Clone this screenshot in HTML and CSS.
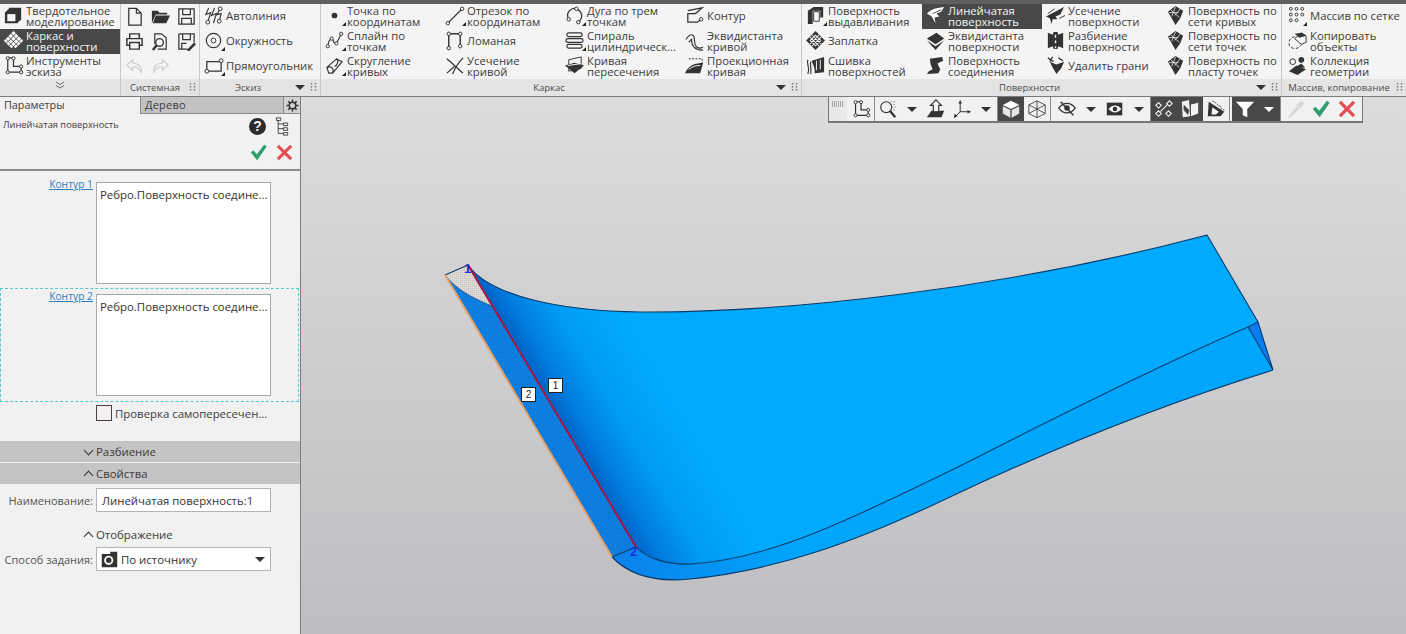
FILE: index.html
```html
<!DOCTYPE html>
<html lang="ru">
<head>
<meta charset="utf-8">
<title>Линейчатая поверхность</title>
<link rel="stylesheet" href="styles.css">
</head>
<body>
<svg class="sprite" xmlns="http://www.w3.org/2000/svg">
<defs>
<symbol id="solid" viewBox="0 0 22 22"><path d="M2 8 7 3H19V15L15 19H2Z" fill="#333"/><path d="M4.500 9.500H13V17H4.500Z" fill="#f4f4f4"/></symbol>
<symbol id="mesh" viewBox="0 0 22 22"><g fill="currentColor" transform="rotate(45 11 11)"><rect x="4" y="4" width="3.300" height="3.300"/><rect x="8" y="4" width="3.300" height="3.300"/><rect x="12" y="4" width="3.300" height="3.300"/><rect x="15.800" y="4" width="2.500" height="3.300"/><rect x="4" y="8" width="3.300" height="3.300"/><rect x="8" y="8" width="3.300" height="3.300"/><rect x="12" y="8" width="3.300" height="3.300"/><rect x="15.800" y="8" width="2.500" height="3.300"/><rect x="4" y="12" width="3.300" height="3.300"/><rect x="8" y="12" width="3.300" height="3.300"/><rect x="12" y="12" width="3.300" height="3.300"/><rect x="15.800" y="12" width="2.500" height="3.300"/><rect x="4" y="15.800" width="3.300" height="2.500"/><rect x="8" y="15.800" width="3.300" height="2.500"/><rect x="12" y="15.800" width="3.300" height="2.500"/></g></symbol>
<symbol id="sketch" viewBox="0 0 22 22"><path d="M5 3V18H19V12H11V3Z" fill="none" stroke="#333" stroke-width="1.300"/><g fill="#f4f4f4" stroke="#333"><circle cx="5" cy="3.500" r="1.700"/><circle cx="11" cy="3.500" r="1.700"/><circle cx="5" cy="18" r="1.700"/><circle cx="19" cy="18" r="1.700"/><circle cx="19" cy="12" r="1.700"/></g></symbol>
<symbol id="new" viewBox="0 0 22 22"><path d="M5 2.500H13L18 7.500V20H5ZM13 2.500V7.500H18" fill="none" stroke="#333" stroke-width="1.300"/></symbol>
<symbol id="open" viewBox="0 0 22 22"><path d="M2 5H8L10 7H18V9H6L2 18Z" fill="#333"/><path d="M6 10H21L17 18H3Z" fill="#333"/></symbol>
<symbol id="save" viewBox="0 0 22 22"><path d="M3 3H19V19H3ZM7 3V9H15V3M6 19V13H16V19" fill="none" stroke="#333" stroke-width="1.300"/></symbol>
<symbol id="print" viewBox="0 0 22 22"><path d="M6 8V3H16V8M6 15H3V8H19V15H16M6 12H16V19H6Z" fill="none" stroke="#333" stroke-width="1.500"/></symbol>
<symbol id="preview" viewBox="0 0 22 22"><path d="M5 14V3H12L17 7V19H8" fill="none" stroke="#333" stroke-width="1.200"/><circle cx="10" cy="12" r="4" fill="#f4f4f4" stroke="#333" stroke-width="1.400"/><path d="M7 15 3 20" stroke="#333" stroke-width="2.500"/></symbol>
<symbol id="saveas" viewBox="0 0 22 22"><path d="M3 3H19V12M12 19H3V3M7 3V9H15V3M6 19V13H11" fill="none" stroke="#333" stroke-width="1.300"/><path d="M12 19 19 12 21 14 14 21H12Z" fill="#333"/></symbol>
<symbol id="undo" viewBox="0 0 22 22"><path d="M9 4 3 9.500 9 15V11.500C13 11 16 13 18 17 19 11 15 7.500 9 7.500Z" fill="none" stroke="#cfcfcf" stroke-width="1.300"/></symbol>
<symbol id="redo" viewBox="0 0 22 22"><path d="M13 4 19 9.500 13 15V11.500C9 11 6 13 4 17 3 11 7 7.500 13 7.500Z" fill="none" stroke="#cfcfcf" stroke-width="1.300"/></symbol>
<symbol id="auto" viewBox="0 0 22 22"><path d="M6 3 3 10 8 8 5 18M12 3 9 11 14 9 11 19M18 3 15 10 19 9 17 17" fill="none" stroke="#333" stroke-width="1.200"/><circle cx="5" cy="18" r="2" fill="#f4f4f4" stroke="#333"/><circle cx="17" cy="17" r="2" fill="#f4f4f4" stroke="#333"/><circle cx="18" cy="4" r="2" fill="#f4f4f4" stroke="#333"/></symbol>
<symbol id="circle" viewBox="0 0 22 22"><circle cx="11" cy="11" r="7.500" fill="none" stroke="#333" stroke-width="1.200"/><circle cx="11" cy="11" r="2.500" fill="none" stroke="#333"/></symbol>
<symbol id="rect" viewBox="0 0 22 22"><path d="M4 7H19V17H4Z" fill="none" stroke="#333" stroke-width="1.300"/><circle cx="19" cy="6" r="2" fill="#f4f4f4" stroke="#333"/><circle cx="4" cy="17" r="2" fill="#f4f4f4" stroke="#333"/></symbol>
<symbol id="point" viewBox="0 0 22 22"><circle cx="11" cy="11" r="3" fill="#333"/></symbol>
<symbol id="seg" viewBox="0 0 22 22"><path d="M5 18 18 5" stroke="#333" stroke-width="1.300"/><circle cx="4" cy="19" r="1.800" fill="#f4f4f4" stroke="#333"/><circle cx="19" cy="4" r="1.800" fill="#f4f4f4" stroke="#333"/></symbol>
<symbol id="arc" viewBox="0 0 22 22"><path d="M5 15C1 8 8 2 13 4 20 7 20 14 15 18" fill="none" stroke="#333" stroke-width="1.300"/><circle cx="5" cy="15" r="1.800" fill="#f4f4f4" stroke="#333"/><circle cx="13" cy="4" r="1.800" fill="#f4f4f4" stroke="#333"/><circle cx="15" cy="18" r="1.800" fill="#f4f4f4" stroke="#333"/></symbol>
<symbol id="contour" viewBox="0 0 22 22"><path d="M4 6 19 3 12 9H4V18H14L18 15" fill="none" stroke="#333" stroke-width="1.300"/><circle cx="18" cy="15" r="1.800" fill="#f4f4f4" stroke="#333"/></symbol>
<symbol id="spline" viewBox="0 0 22 22"><path d="M4 17C5 8 9 8 10 12S14 14 18 4" fill="none" stroke="#333" stroke-width="1.200"/><g fill="#f4f4f4" stroke="#333"><circle cx="4" cy="17" r="1.700"/><circle cx="8" cy="9" r="1.700"/><circle cx="13" cy="14" r="1.700"/><circle cx="18" cy="4" r="1.700"/></g></symbol>
<symbol id="poly" viewBox="0 0 22 22"><path d="M5 19V4H17V17" fill="none" stroke="#333" stroke-width="1.500"/><g fill="#f4f4f4" stroke="#333"><circle cx="5" cy="19" r="1.800"/><circle cx="5" cy="4" r="1.800"/><circle cx="17" cy="4" r="1.800"/><circle cx="17" cy="17" r="1.800"/></g></symbol>
<symbol id="spiral" viewBox="0 0 22 22"><g fill="none" stroke="#333" stroke-width="1.200"><rect x="3" y="3" width="16" height="4" rx="2"/><rect x="2" y="9" width="18" height="4" rx="2"/><rect x="3" y="15" width="16" height="4" rx="2"/></g></symbol>
<symbol id="offset" viewBox="0 0 22 22"><path d="M2 10C8 1 11 6 11 11S13 21 20 18M5 13C9 8 8 9 8 12S11 22 20 21" fill="none" stroke="#333" stroke-width="1.200"/></symbol>
<symbol id="fillet" viewBox="0 0 22 22"><path d="M3 13 13 4 19 7 9 19H5ZM3 13C8 11 11 15 9 19M13 4C16 6 14 11 11 12" fill="none" stroke="#333" stroke-width="1.200"/></symbol>
<symbol id="trim" viewBox="0 0 22 22"><path d="M3 4C8 8 14 14 20 19M20 3C15 8 11 15 9 20M3 19 11 12" fill="none" stroke="#333" stroke-width="1.300"/></symbol>
<symbol id="inter" viewBox="0 0 22 22"><path d="M5 5 18 2V14L5 17Z" fill="none" stroke="#333"/><path d="M1 11 11 8 21 11 11 19Z" fill="#333"/><path d="M4 11 18 9" stroke="#f4f4f4"/></symbol>
<symbol id="proj" viewBox="0 0 22 22"><path d="M5 4H19V10" fill="none" stroke="#333" stroke-dasharray="2 1.500"/><path d="M1 19C6 9 12 9 20 8L17 19Z" fill="#333"/><path d="M5 15C9 12 12 11 17 11" stroke="#f4f4f4" fill="none"/></symbol>
<symbol id="extr" viewBox="0 0 22 22"><path d="M3 6 9 2H19V13H16V6H8V20H3Z" fill="#333"/><path d="M9 7H15V17H9Z" fill="none" stroke="#333"/></symbol>
<symbol id="ruled" viewBox="0 0 22 22"><path d="M2 9C8 3 14 3 20 2L17 7 12 9 15 12 10 13 11 19 7 12Z" fill="currentColor"/><path d="M8 9 17 5" stroke="#484848"/></symbol>
<symbol id="cutsurf" viewBox="0 0 22 22"><path d="M1 12 20 2 16 10 11 12 13 15 8 15 7 20 5 14Z" fill="#333"/><path d="M3 9 10 4M15 14 21 11" stroke="#333"/></symbol>
<symbol id="net" viewBox="0 0 22 22"><path d="M3 7 11 1 19 6 16 14 11 21 7 14Z" fill="#333"/><path d="M6 5 15 13M11 2 7 12M16 4 10 11M4 8 14 8" stroke="#f4f4f4" stroke-width=".800"/></symbol>
<symbol id="patch" viewBox="0 0 22 22"><g transform="rotate(45 11 11)"><rect x="4" y="4" width="14" height="14" fill="#333"/><path d="M7 7H15V15H7ZM9.500 4V18M12.500 4V18M4 9.500H18M4 12.500H18" fill="none" stroke="#f4f4f4"/></g></symbol>
<symbol id="equi" viewBox="0 0 22 22"><path d="M2 9 12 3 20 9 11 15Z" fill="#333"/><path d="M2 11 11 17 20 11 11 21Z" fill="#333"/></symbol>
<symbol id="split" viewBox="0 0 22 22"><path d="M3 3 8 5 9 2H13L14 5 19 3V19L14 17 13 20H9L8 17 3 19Z" fill="#333"/><path d="M11 5V8M11 11V14M11 17V19" stroke="#f4f4f4" stroke-width="1.500"/></symbol>
<symbol id="stitch" viewBox="0 0 22 22"><path d="M7 6 20 2V18L10 19C11 13 8 10 7 6Z" fill="#333"/><path d="M3 5C1 10 6 13 3 20M6 7C5 11 7 15 6 20" fill="none" stroke="#333" stroke-width="1.200"/><path d="M12 6V16M16 5V15" stroke="#f4f4f4"/></symbol>
<symbol id="joint" viewBox="0 0 22 22"><path d="M5 4 18 2 19 6 13 9 16 15 14 19 2 20 4 17 8 15 6 10Z" fill="#333"/></symbol>
<symbol id="delface" viewBox="0 0 22 22"><path d="M5 7 12 10 20 7 17 14 12 20 8 13Z" fill="#333"/><path d="M3 3 9 7M8 2 5 7M14 3 19 6" stroke="#333" stroke-width="1.300"/></symbol>
<symbol id="array" viewBox="0 0 22 22"><g fill="none" stroke="#333"><circle cx="4" cy="4" r="1.500"/><circle cx="10" cy="4" r="1.500"/><circle cx="16" cy="4" r="1.500"/><circle cx="4" cy="10" r="1.500"/><circle cx="10" cy="10" r="1.500"/><circle cx="16" cy="10" r="1.500"/><circle cx="4" cy="16" r="1.500"/><circle cx="10" cy="16" r="1.500"/></g></symbol>
<symbol id="copy" viewBox="0 0 22 22"><path d="M8 9 15 3 20 6V13L15 15Z" fill="#f4f4f4" stroke="#333"/><path d="M8 4 15 3 20 6 13 8Z" fill="#333"/><path d="M8 7C2 8 1 14 3 17S12 21 15 15" fill="none" stroke="#333" stroke-dasharray="3 2"/></symbol>
<symbol id="coll" viewBox="0 0 22 22"><path d="M2 17 10 11 20 15 11 21Z" fill="#333"/><path d="M7 14 15 9 19 13" fill="#333"/><circle cx="15" cy="5" r="3" fill="#333"/><circle cx="6" cy="7" r="3" fill="none" stroke="#333"/></symbol>
<symbol id="zoom" viewBox="0 0 22 22"><circle cx="9" cy="9" r="6" fill="none" stroke="#333" stroke-width="1.200"/><path d="M13 13 19 20" stroke="#333" stroke-width="2.500"/><path d="M14 3H20M14 6H20M15 9H20M14 12H20" stroke="#777" stroke-dasharray="1.500 1.500"/></symbol>
<symbol id="orient" viewBox="0 0 22 22"><path d="M6 13H20L17 20H1Z" fill="#333"/><path d="M11 1 17 7H14V14H8V7H5Z" fill="#f4f4f4" stroke="#333" stroke-width="1.300"/></symbol>
<symbol id="triad" viewBox="0 0 22 22"><path d="M9 14V3M9 14H20M9 14 3 20" fill="none" stroke="#333" stroke-width="1.100"/><path d="M9 1 11 5H7ZM21 14 17 12V16ZM2 21 3 16 6 19Z" fill="#333"/></symbol>
<symbol id="cube" viewBox="0 0 22 22"><path d="M11 2 20 6.500 11 11 2 6.500Z" fill="#fff"/><path d="M2 8 10.300 12V20.500L2 16ZM20 8 11.700 12V20.500L20 16Z" fill="#e6e6e6"/></symbol>
<symbol id="wire" viewBox="0 0 22 22"><path d="M11 2 20 6.500V16L11 20.500 2 16V6.500ZM2 6.500 11 11 20 6.500M11 11V20.500M11 2V11M2 16 11 11 20 16" fill="none" stroke="#333" stroke-width=".900"/></symbol>
<symbol id="eye" viewBox="0 0 22 22"><path d="M2 10C7 3 15 3 20 10 15 17 7 17 2 10Z" fill="none" stroke="#333" stroke-width="1.400"/><circle cx="11" cy="10" r="3" fill="#333"/><path d="M4 3 18 18" stroke="#333" stroke-width="1.600"/></symbol>
<symbol id="eye2" viewBox="0 0 22 22"><path d="M2 4H19V18H2Z" fill="#333"/><path d="M4 11C8 6 14 6 18 11 14 16 8 16 4 11Z" fill="#f4f4f4"/><circle cx="11" cy="11" r="2.500" fill="#333"/></symbol>
<symbol id="snap" viewBox="0 0 22 22"><path d="M7 14 15 6" stroke="#f4f4f4" stroke-width="1.200"/><g fill="none" stroke="#f4f4f4" stroke-width="1.200"><path d="M17 2 20 5 17 8 14 5Z"/><path d="M5 4 8 7 5 10 2 7Z"/><path d="M5 13 8 16 5 19 2 16Z"/><path d="M16 13 19 16 16 19 13 16Z"/></g></symbol>
<symbol id="f1" viewBox="0 0 22 22"><path d="M2 3 10 1 11 19 3 20Z" fill="#f4f4f4"/><path d="M12 6 20 4 20 16 12 19Z" fill="#f4f4f4"/><path d="M4 6 10 12 9 18 4 12Z" fill="#484848"/></symbol>
<symbol id="f2" viewBox="0 0 22 22"><path d="M3 3 20 14 16 19H2Z" fill="#333"/><path d="M7 2 12 5M12 6 17 9M16 10 21 13" stroke="#333" stroke-dasharray="2 1"/><path d="M7 9 14 14 11 17H6Z" fill="#f4f4f4"/></symbol>
<symbol id="funnel" viewBox="0 0 22 22"><path d="M1 3H21L13.500 11V20L8.500 18V11Z" fill="#fff"/></symbol>
<symbol id="dropper" viewBox="0 0 22 22"><path d="M3 20 13 8 16 11 6 20ZM14 5 18 2 21 5 18 9 17 11 12 6Z" fill="#d6d6d6"/></symbol>
<symbol id="check" viewBox="0 0 22 22"><path d="M2 11 5 8.500 9 13 17.500 2 20.500 4 9.500 20Z" fill="#2f9d6d"/></symbol>
<symbol id="cross" viewBox="0 0 22 22"><path d="M2 4.500 4.500 2 11 8.500 17.500 2 20 4.500 13.500 11 20 17.500 17.500 20 11 13.500 4.500 20 2 17.500 8.500 11Z" fill="#e14f50"/></symbol>
<symbol id="gear" viewBox="0 0 22 22"><circle cx="11" cy="11" r="5.500" fill="none" stroke="#333" stroke-width="2.500"/><path d="M11 1V5M11 17V21M1 11H5M17 11H21M4 4 7 7M15 15 18 18M18 4 15 7M7 15 4 18" stroke="#333" stroke-width="2.500"/></symbol>
<symbol id="tree" viewBox="0 0 22 22"><path d="M6 2V19H12M6 8H12M6 13.500H12" fill="none" stroke="#333"/><path d="M4 1H9V4H4ZM12 7H17V10H12ZM12 12.500H17V15.500H12ZM12 18H17V21H12Z" fill="#f1f1f1" stroke="#333"/></symbol>
<symbol id="cam" viewBox="0 0 22 22"><path d="M1 4H12V1H21V21H1Z" fill="#333"/><circle cx="10" cy="12" r="6" fill="#f4f4f4"/><circle cx="10" cy="12" r="3.500" fill="#333"/></symbol>
<symbol id="dots" viewBox="0 0 7 9"><path d="M1.500 0V9M5.500 0V9" stroke="#777" stroke-width="1.500" stroke-dasharray="1.500 1.500"/></symbol>
<symbol id="dotsh" viewBox="0 0 12 6"><path d="M0 1H12M0 3H12M0 5H12" stroke="#666" stroke-width="1" stroke-dasharray="1 1"/></symbol>
<symbol id="dblchev" viewBox="0 0 10 8"><path d="M1 1 5 3.500 9 1M1 4.500 5 7 9 4.500" fill="none" stroke="#666"/></symbol>
</defs>
</svg>

<header class="ribbon">
  <section class="group modes">
    <div class="group-body one">
      <div class="item"><svg class="ico"><use href="#solid"/></svg><span>Твердотельное<br>моделирование</span></div>
      <div class="item on"><svg class="ico"><use href="#mesh"/></svg><span>Каркас и<br>поверхности</span></div>
      <div class="item"><svg class="ico"><use href="#sketch"/></svg><span>Инструменты<br>эскиза</span></div>
    </div>
    <footer class="group-foot center"><svg class="dbl"><use href="#dblchev"/></svg></footer>
  </section>
  <section class="group system">
    <div class="group-body icons">
      <svg class="ico"><use href="#new"/></svg><svg class="ico"><use href="#open"/></svg><svg class="ico"><use href="#save"/></svg>
      <svg class="ico"><use href="#print"/></svg><svg class="ico"><use href="#preview"/></svg><svg class="ico"><use href="#saveas"/></svg>
      <svg class="ico"><use href="#undo"/></svg><svg class="ico"><use href="#redo"/></svg>
    </div>
    <footer class="group-foot"><span class="foot-title">Системная</span><svg class="grip"><use href="#dots"/></svg></footer>
  </section>
  <section class="group">
    <div class="group-body one">
      <div class="item"><svg class="ico"><use href="#auto"/></svg><span>Автолиния</span></div>
      <div class="item more"><svg class="ico"><use href="#circle"/></svg><span>Окружность</span></div>
      <div class="item more"><svg class="ico"><use href="#rect"/></svg><span>Прямоугольник</span></div>
    </div>
    <footer class="group-foot has-caret"><span class="foot-title">Эскиз</span><i class="caret"></i><svg class="grip"><use href="#dots"/></svg></footer>
  </section>
  <section class="group">
    <div class="group-body four">
      <div class="item more"><svg class="ico"><use href="#point"/></svg><span>Точка по<br>координатам</span></div>
      <div class="item more"><svg class="ico"><use href="#seg"/></svg><span>Отрезок по<br>координатам</span></div>
      <div class="item more"><svg class="ico"><use href="#arc"/></svg><span>Дуга по трем<br>точкам</span></div>
      <div class="item"><svg class="ico"><use href="#contour"/></svg><span>Контур</span></div>
      <div class="item more"><svg class="ico"><use href="#spline"/></svg><span>Сплайн по<br>точкам</span></div>
      <div class="item"><svg class="ico"><use href="#poly"/></svg><span>Ломаная</span></div>
      <div class="item more"><svg class="ico"><use href="#spiral"/></svg><span>Спираль<br>цилиндрическ...</span></div>
      <div class="item"><svg class="ico"><use href="#offset"/></svg><span>Эквидистанта<br>кривой</span></div>
      <div class="item more"><svg class="ico"><use href="#fillet"/></svg><span>Скругление<br>кривых</span></div>
      <div class="item"><svg class="ico"><use href="#trim"/></svg><span>Усечение<br>кривой</span></div>
      <div class="item"><svg class="ico"><use href="#inter"/></svg><span>Кривая<br>пересечения</span></div>
      <div class="item"><svg class="ico"><use href="#proj"/></svg><span>Проекционная<br>кривая</span></div>
    </div>
    <footer class="group-foot has-caret"><span class="foot-title">Каркас</span><i class="caret"></i><svg class="grip"><use href="#dots"/></svg></footer>
  </section>
  <section class="group">
    <div class="group-body four">
      <div class="item more"><svg class="ico"><use href="#extr"/></svg><span>Поверхность<br>выдавливания</span></div>
      <div class="item on"><svg class="ico"><use href="#ruled"/></svg><span>Линейчатая<br>поверхность</span></div>
      <div class="item"><svg class="ico"><use href="#cutsurf"/></svg><span>Усечение<br>поверхности</span></div>
      <div class="item"><svg class="ico"><use href="#net"/></svg><span>Поверхность по<br>сети кривых</span></div>
      <div class="item"><svg class="ico"><use href="#patch"/></svg><span>Заплатка</span></div>
      <div class="item"><svg class="ico"><use href="#equi"/></svg><span>Эквидистанта<br>поверхности</span></div>
      <div class="item"><svg class="ico"><use href="#split"/></svg><span>Разбиение<br>поверхности</span></div>
      <div class="item"><svg class="ico"><use href="#net"/></svg><span>Поверхность по<br>сети точек</span></div>
      <div class="item"><svg class="ico"><use href="#stitch"/></svg><span>Сшивка<br>поверхностей</span></div>
      <div class="item"><svg class="ico"><use href="#joint"/></svg><span>Поверхность<br>соединения</span></div>
      <div class="item"><svg class="ico"><use href="#delface"/></svg><span>Удалить грани</span></div>
      <div class="item"><svg class="ico"><use href="#net"/></svg><span>Поверхность по<br>пласту точек</span></div>
    </div>
    <footer class="group-foot has-caret"><span class="foot-title">Поверхности</span><i class="caret"></i><svg class="grip"><use href="#dots"/></svg></footer>
  </section>
  <section class="group last">
    <div class="group-body one">
      <div class="item more"><svg class="ico"><use href="#array"/></svg><span>Массив по сетке</span></div>
      <div class="item"><svg class="ico"><use href="#copy"/></svg><span>Копировать<br>объекты</span></div>
      <div class="item"><svg class="ico"><use href="#coll"/></svg><span>Коллекция<br>геометрии</span></div>
    </div>
    <footer class="group-foot"><span class="foot-title">Массив, копирование</span><svg class="grip"><use href="#dots"/></svg></footer>
  </section>
</header>

<main class="work">
  <aside class="panel">
    <div class="tabs">
      <div class="tab active">Параметры</div>
      <div class="tab">Дерево</div>
      <div class="tab gear"><svg class="ico-s"><use href="#gear"/></svg></div>
    </div>
    <div class="pane-head">
      <div class="head-row">
        <span class="head-title">Линейчатая поверхность</span>
        <span class="help">?</span>
        <svg class="ico-h"><use href="#tree"/></svg>
      </div>
      <div class="head-actions">
        <svg class="ico-h"><use href="#check"/></svg>
        <svg class="ico-h"><use href="#cross"/></svg>
      </div>
    </div>
    <div class="field first">
      <a class="link">Контур 1</a>
      <div class="listbox">Ребро.Поверхность соедине...</div>
    </div>
    <div class="field active">
      <a class="link">Контур 2</a>
      <div class="listbox">Ребро.Поверхность соедине...</div>
    </div>
    <label class="check-row"><i class="checkbox"></i><span>Проверка самопересечен...</span></label>
    <div class="bar first-bar"><i class="chev down"></i>Разбиение</div>
    <div class="bar"><i class="chev up"></i>Свойства</div>
    <div class="row name-row">
      <span class="row-label">Наименование:</span>
      <div class="input">Линейчатая поверхность:1</div>
    </div>
    <div class="sub-head"><i class="chev up"></i>Отображение</div>
    <div class="row select-row">
      <span class="row-label">Способ задания:</span>
      <div class="input select"><svg class="ico-cam"><use href="#cam"/></svg><span>По источнику</span><i class="caret"></i></div>
    </div>
  </aside>

  <div class="viewport">
    <svg class="scene" viewBox="301 97 1105 537" xmlns="http://www.w3.org/2000/svg">
      <defs>
        <linearGradient id="mainFill" gradientUnits="userSpaceOnUse" x1="550" y1="404" x2="640" y2="351">
          <stop offset="0" stop-color="#0062c4"/>
          <stop offset=".18" stop-color="#007ce0"/>
          <stop offset=".5" stop-color="#009af4"/>
          <stop offset="1" stop-color="#00aaff"/>
        </linearGradient>
        <linearGradient id="bandFill" gradientUnits="userSpaceOnUse" x1="612" y1="560" x2="800" y2="560">
          <stop offset="0" stop-color="#0a80ea"/>
          <stop offset="1" stop-color="#00a6fc"/>
        </linearGradient>
        <pattern id="dither" width="2" height="2" patternUnits="userSpaceOnUse">
          <rect width="2" height="2" fill="#0c82e4"/>
          <rect width="1" height="1" fill="#0a70cc"/>
        </pattern>
        <pattern id="hatch" width="2" height="2" patternUnits="userSpaceOnUse">
          <rect width="2" height="2" fill="#ddd8d6"/>
          <rect width="1" height="1" fill="#c6c1c1"/>
        </pattern>
      </defs>
      <path class="band" d="M612 557C632 578 660 582 690 579C780 570 860 540 950 497C1060 445 1160 405 1273 370L1258 322 1248 327C1160 365 1050 420 960 466C860 515 770 560 690 564C665 565 645 557 636 547Z"/>
      <path class="main" d="M468 265C490 296 560 311 640 312C780 313 1000 290 1207 235L1258 322 1248 327C1160 365 1050 420 960 466C860 515 770 560 690 564C665 565 645 557 636 547Z"/>
      <path class="strip" d="M445 275C458 292 478 300 494 307L636 547 612 557Z"/>
      <path class="cap" d="M445 275 468 265 494 307C478 300 458 292 445 275Z"/>
      <path class="wedge" d="M1258 322 1248 327 1273 370Z"/>
      <path class="outline" d="M1207 235 1258 322 1273 370M468 265C490 296 560 311 640 312C780 313 1000 290 1207 235M1248 327C1160 365 1050 420 960 466C860 515 770 560 690 564C665 565 645 557 636 547M612 557C632 578 660 582 690 579C780 570 860 540 950 497C1060 445 1160 405 1273 370M1258 322 1248 327 1273 370M445 275 468 265M612 557 636 547"/>
      <path class="outline thin" d="M445 275C458 292 478 300 494 307"/>
      <path class="edge-red" d="M468 265 636 547"/>
      <path class="edge-orange" d="M445 275 612 557"/>
      <text class="vertex" x="464" y="273">1</text>
      <text class="vertex" x="630" y="556">2</text>
      <rect class="tag" x="548.500" y="378.500" width="14" height="14"/>
      <text class="tag-text" x="555.500" y="389">1</text>
      <rect class="tag" x="521.500" y="387.500" width="14" height="14"/>
      <text class="tag-text" x="528.500" y="398">2</text>
    </svg>

    <div class="viewbar">
      <span class="vb-sec grip-sec"><svg class="grip-h"><use href="#dotsh"/></svg></span>
      <span class="vb-sec axes"><svg class="vb-ico"><use href="#sketch"/></svg></span>
      <span class="vb-sec">
        <b class="vb"><svg class="vb-ico"><use href="#zoom"/></svg></b><b class="vb narrow"><i class="caret"></i></b>
        <b class="vb"><svg class="vb-ico"><use href="#orient"/></svg></b><b class="vb"><svg class="vb-ico"><use href="#triad"/></svg></b><b class="vb narrow"><i class="caret"></i></b>
      </span>
      <span class="vb-sec">
        <b class="vb dark"><svg class="vb-ico"><use href="#cube"/></svg></b><b class="vb"><svg class="vb-ico"><use href="#wire"/></svg></b>
      </span>
      <span class="vb-sec eye-sec">
        <b class="vb"><svg class="vb-ico"><use href="#eye"/></svg></b><b class="vb narrow"><i class="caret"></i></b>
        <b class="vb"><svg class="vb-ico"><use href="#eye2"/></svg></b><b class="vb narrow"><i class="caret"></i></b>
      </span>
      <span class="vb-sec">
        <b class="vb dark"><svg class="vb-ico"><use href="#snap"/></svg></b><b class="vb dark"><svg class="vb-ico"><use href="#f1"/></svg></b><b class="vb"><svg class="vb-ico"><use href="#f2"/></svg></b>
      </span>
      <span class="vb-sec filter-sec">
        <b class="vb dark"><svg class="vb-ico"><use href="#funnel"/></svg></b><b class="vb dark narrow"><i class="caret white"></i></b>
      </span>
      <span class="vb-sec act-sec">
        <b class="vb"><svg class="vb-ico"><use href="#dropper"/></svg></b><b class="vb"><svg class="vb-ico"><use href="#check"/></svg></b><b class="vb"><svg class="vb-ico"><use href="#cross"/></svg></b>
      </span>
    </div>
  </div>
</main>
</body>
</html>
```
FILE: styles.css
```css
* { box-sizing: border-box; }
html, body { margin: 0; height: 100%; }
body {
  width: 1406px;
  height: 634px;
  overflow: hidden;
  display: flex;
  flex-direction: column;
  font-family: "Open Sans", "Noto Sans", sans-serif;
  font-size: 11.3px;
  color: #3c3c3c;
  background: #f1f1f1;
}
.sprite { position: absolute; width: 0; height: 0; }

/* Ribbon */
.ribbon {
  flex: none;
  display: flex;
  height: 97px;
  border-top: 4px solid #5f5f5f;
  border-bottom: 1px solid #7b7b7b;
  background: #f4f4f4;
}
.group {
  flex: none;
  display: flex;
  flex-direction: column;
  width: 120px;
  border-right: 1px solid #c9c9c9;
}
.modes { width: 121px; }
.system { width: 79px; }
.group.last { width: 124px; border-right: 0; }
.group:nth-child(3) { width: 121px; }
.group:nth-child(4) { width: 481px; }
.group:nth-child(5) { width: 480px; }
.group-body { flex: 1; display: grid; grid-auto-rows: 25px; }
.group-body.one { grid-template-columns: 1fr; }
.group-body.four { grid-template-columns: repeat(4, 120px); }
.group-body.icons {
  grid-template-columns: repeat(3, 26px);
  justify-items: center;
  align-items: center;
}
.item {
  position: relative;
  display: flex;
  align-items: center;
  gap: 2px;
  padding: 0 0 2px 3px;
  line-height: 11px;
  white-space: nowrap;
}
.item.on { background: #484848; color: #f5f5f5; }
.item.more::before {
  content: "";
  position: absolute;
  left: 21px;
  bottom: 3px;
  border-left: 4px solid transparent;
  border-bottom: 4px solid #222;
}
.group.last .item { padding-left: 5px; }
.ico { flex: none; width: 21px; height: 21px; color: #333; }
.item.on .ico { color: #fff; }
.group-foot {
  flex: none;
  position: relative;
  display: flex;
  align-items: center;
  justify-content: flex-end;
  gap: 5px;
  height: 17px;
  padding-right: 3px;
  background: #e4e4e4;
}
.group-foot.center { justify-content: center; padding: 0 0 6px; }
.foot-title {
  position: absolute;
  left: 0;
  right: 10px;
  text-align: center;
  font-size: 9.500px;
  color: #4c4c4c;
}
.has-caret .foot-title { right: 24px; }
.dbl { width: 10px; height: 8px; }
.grip { width: 7px; height: 9px; flex: none; }
.caret {
  flex: none;
  display: inline-block;
  border-left: 5px solid transparent;
  border-right: 5px solid transparent;
  border-top: 5px solid #333;
}
.caret.white { border-top-color: #fff; }

/* Work area */
.work { flex: 1; display: flex; min-height: 0; }
.panel {
  flex: none;
  width: 301px;
  display: flex;
  flex-direction: column;
  background: #f1f1f1;
  border-right: 1px solid #7d7d7d;
  font-size: 11.400px;
}
.tabs {
  flex: none;
  display: grid;
  grid-template-columns: 140px 143px 17px;
  height: 17px;
}
.tab {
  padding: 0 4px;
  line-height: 16px;
  font-size: 11px;
  background: #c2c2c2;
  border-left: 1px solid #8a8a8a;
  border-bottom: 1px solid #8a8a8a;
  letter-spacing: .2px;
}
.tab.active { background: #f1f1f1; border: 0; font-size: 10.800px; letter-spacing: 0; }
.tab.gear { display: flex; align-items: center; justify-content: center; padding: 0; background: #d2d2d2; }
.ico-s { width: 13px; height: 13px; }
.pane-head {
  flex: none;
  height: 57px;
  border-bottom: 2px solid #8c8c8c;
  display: flex;
  flex-direction: column;
}
.head-row {
  display: flex;
  align-items: center;
  gap: 7px;
  height: 24px;
  padding: 0 8px 0 3px;
}
.head-title { flex: 1; font-size: 9.300px; margin-bottom: 4px; }
.help {
  width: 17px;
  height: 17px;
  border-radius: 50%;
  background: #2c2c2c;
  color: #f4f4f4;
  font: bold 14px/17px "Liberation Sans", sans-serif;
  text-align: center;
}
.ico-h { width: 19px; height: 19px; flex: none; }
.head-actions { display: flex; justify-content: flex-end; gap: 7px; padding: 5px 6px 0 0; }
.field {
  display: grid;
  grid-template-columns: 93px 175px;
  column-gap: 3px;
  padding: 5px 0;
}
.field.first { padding-top: 11px; }
.field.active {
  margin: 0 2px 0 1px;
  grid-template-columns: 92px 175px;
  outline: 1px dashed #58c8c8;
}
.link {
  margin-top: -4px;
  text-align: right;
  font-size: 10.300px;
  line-height: 12px;
  color: #2f7fc0;
  text-decoration: underline;
}
.listbox {
  height: 102px;
  padding: 3px;
  background: #fff;
  border: 1px solid #a8a8a8;
  white-space: nowrap;
  line-height: 18px;
  color: #333;
}
.check-row {
  display: flex;
  align-items: center;
  gap: 3px;
  height: 16px;
  margin-top: 4px;
  padding-left: 96px;
}
.checkbox {
  width: 16px;
  height: 16px;
  border: 1px solid #4a4048;
  background: #f4f0f0;
}
.bar {
  height: 21px;
  margin-top: 1px;
  padding-left: 96px;
  line-height: 21px;
  background: #c4c4c4;
}
.first-bar { margin-top: 20px; }
.chev {
  display: inline-block;
  width: 7px;
  height: 7px;
  margin: 0 4px 0 -11px;
  border-right: 1.500px solid #333;
  border-bottom: 1.500px solid #333;
  transform: rotate(45deg);
  vertical-align: 2px;
}
.chev.up { transform: rotate(225deg); vertical-align: -1px; }
.row {
  display: grid;
  grid-template-columns: 93px 175px;
  column-gap: 3px;
  align-items: center;
}
.name-row { margin-top: 4px; }
.row-label { font-size: 11px; text-align: right; color: #555; white-space: nowrap; }
.input {
  height: 24px;
  padding: 0 5px;
  line-height: 24px;
  background: #fff;
  border: 1px solid #b4b4b4;
  color: #333;
  white-space: nowrap;
}
.sub-head {
  height: 18px;
  margin-top: 14px;
  padding-left: 96px;
  line-height: 18px;
}
.select-row { margin-top: 3px; }
.select { display: flex; align-items: center; gap: 3px; padding: 1px 5px 0 4px; }
.select span { flex: 1; }
.ico-cam { width: 17px; height: 17px; flex: none; }

/* Viewport */
.viewport {
  position: relative;
  flex: 1;
  background: linear-gradient(#dcdcdc, #bebec2);
}
.scene { display: block; width: 100%; height: 100%; }
.band { fill: url(#bandFill); }
.main { fill: url(#mainFill); }
.strip { fill: url(#dither); }
.cap { fill: url(#hatch); }
.wedge { fill: #0a7cf0; }
.outline { fill: none; stroke: #0a3a68; stroke-width: 1.100; }
.outline.thin { stroke: #0b4a8a; stroke-width: .800; }
.edge-red { stroke: #a8153f; stroke-width: 2; }
.edge-orange { stroke: #e9a066; stroke-width: 2; }
.vertex { font: bold 13px "Liberation Sans", sans-serif; fill: #1a30d8; }
.tag { fill: #fff; stroke: #222; stroke-width: 1; }
.tag-text { font: 10px "Liberation Sans", sans-serif; fill: #222; text-anchor: middle; }

.viewbar {
  position: absolute;
  left: 527px;
  top: 0;
  display: flex;
  height: 26px;
  width: 535px;
  background: #f1f1f1;
  border: 1px solid #777;
  border-top: 0;
  border-bottom-width: 2px;
}
.vb-sec {
  display: flex;
  align-items: stretch;
  border-right: 1px solid #8a8a8a;
}
.vb-sec:last-child { border-right: 0; }
.grip-sec { width: 18px; align-items: flex-start; justify-content: center; padding-top: 4px; border-right: 0; background: #e8e8e8; }
.grip-h { width: 12px; height: 6px; }
.axes { width: 28px; justify-content: center; align-items: center; }
.eye-sec { padding-left: 3px; }
.filter-sec { margin-left: 2px; }
.act-sec { padding-left: 1px; }
.vb {
  display: flex;
  align-items: center;
  justify-content: center;
  width: 26px;
}
.vb.narrow { width: 22px; }
.vb.dark { background: #484848; }
.vb-ico { width: 20px; height: 20px; }
```
